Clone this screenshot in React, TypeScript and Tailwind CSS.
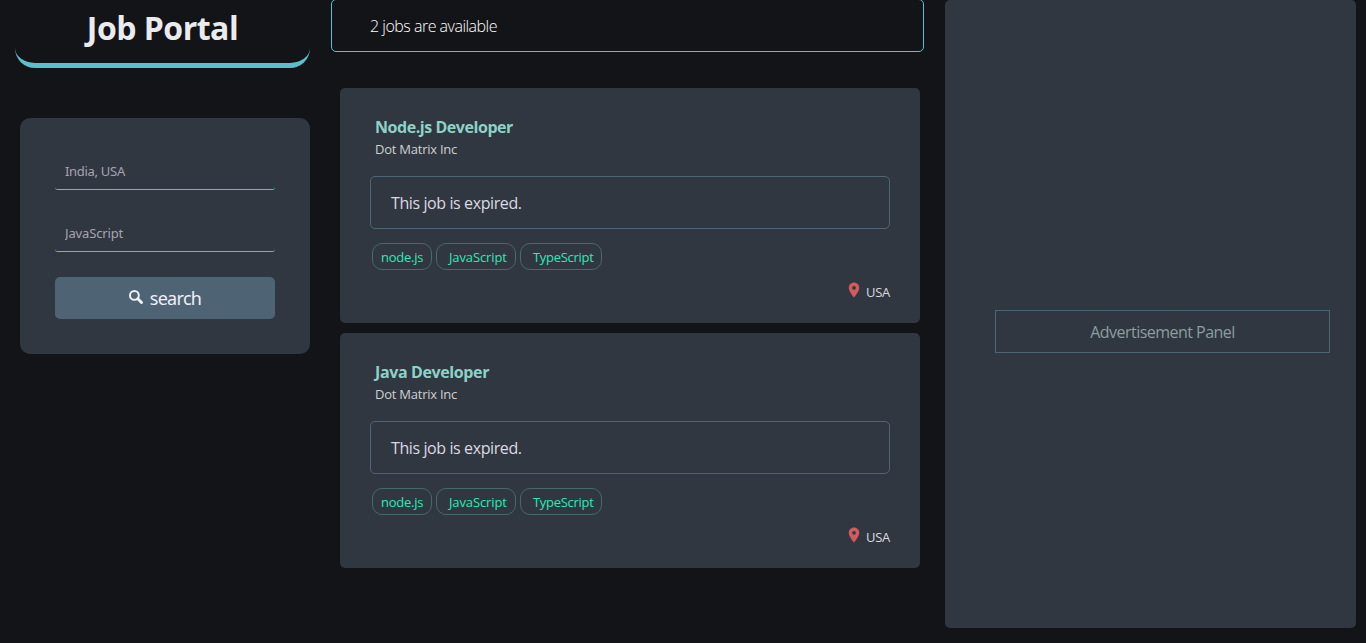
import { MdLocationOn } from "react-icons/md";

const jobs = [
  { title: "Node.js Developer", titleSpacing: "tracking-[-0.45px]", company: "Dot Matrix Inc", place: "USA" },
  { title: "Java Developer", titleSpacing: "tracking-[-0.38px]", company: "Dot Matrix Inc", place: "USA" },
];

function SearchIcon() {
  return (
    <svg viewBox="0 0 14 14" className="mb-[2px] h-[14px] w-[14px]" fill="none" stroke="currentColor">
      <circle cx="5.4" cy="5.4" r="4.4" strokeWidth="2" />
      <path d="M8.8 8.8 L12.5 12.5" strokeWidth="2.9" strokeLinecap="round" />
    </svg>
  );
}

function Job({ job }: { job: (typeof jobs)[number] }) {
  return (
    <article className="h-[235px] w-[580px] rounded-[5px] bg-[#303740] px-[30px] pt-[28px]">
      <h2 className={`pl-[5px] text-[16px] leading-[22px] font-bold text-[#8dd2c8] ${job.titleSpacing}`}>{job.title}</h2>
      <p className="pl-[5px] text-[13px] leading-[22px] tracking-[-0.24px] text-[#cfcfd2]">{job.company}</p>
      <div className="mt-[16px] flex h-[53px] items-center rounded-[5px] border border-[#4e6577] pt-px pl-[20px] text-[16px] text-[#dcd9e2]">
        <span className="tracking-[-0.4px]">This job is expired.</span>
      </div>
      <div className="mt-[14px] ml-[2px] flex gap-[4px] text-[13px] text-[#2beab8]">
        <span className="flex h-[27px] w-[60px] items-center rounded-[10px] border border-[#47696b] pt-[2px] pl-[8px] tracking-[-0.25px]">node.js</span>
        <span className="flex h-[27px] w-[80px] items-center rounded-[10px] border border-[#47696b] pt-[2px] pl-[12px] tracking-[-0.12px]">JavaScript</span>
        <span className="flex h-[27px] w-[82px] items-center rounded-[10px] border border-[#47696b] pt-[2px] pl-[12px] tracking-[-0.3px]">TypeScript</span>
      </div>
      <div className="mt-[11px] flex h-[22px] items-start justify-end text-[13px] text-[#dcd9e2]">
        <MdLocationOn className="-mt-[0.5px] mr-[3px] h-[18px] w-[18px] text-[#d35b5d]" />
        <span className="w-[24px] leading-[22px] tracking-[-0.3px]">{job.place}</span>
      </div>
    </article>
  );
}

export default function App() {
  return (
    <div className="flex h-[643px] w-[1366px] overflow-hidden bg-[#131418] font-['Open_Sans',sans-serif]">
      <aside className="w-[310px] shrink-0">
        <h1 className="ml-[15px] h-[68px] rounded-[20px] border-b-[5px] border-[#5bbfcc] pt-[6px] text-center text-[32px] leading-[44px] font-bold tracking-[-0.5px] text-[#ebebed]">
          Job Portal
        </h1>
        <form className="mt-[50px] ml-[20px] h-[236px] rounded-[10px] bg-[#303740] px-[35px] pt-[35px] font-['Noto_Sans',sans-serif]">
          <input
            placeholder="India, USA"
            className="block h-[37px] w-full rounded-[3px] border-b border-[#5bbfcc] px-[10px] text-[13px] tracking-[-0.3px] placeholder:text-[#a8a3b0]"
          />
          <input
            placeholder="JavaScript"
            className="mt-[25px] block h-[37px] w-full rounded-[3px] border-b border-[#5bbfcc] px-[10px] text-[13px] tracking-[-0.15px] placeholder:text-[#a8a3b0]"
          />
          <button
            type="button"
            className="mt-[25px] flex h-[42px] w-full items-center justify-center gap-[7px] rounded-[5px] bg-[#4e6373] text-[18px] text-[#f0eff8]"
          >
            <SearchIcon />
            <span className="tracking-[-0.7px]">search</span>
          </button>
        </form>
      </aside>
      <main className="ml-[21px] w-[593px] shrink-0">
        <div className="-mt-px flex h-[53px] items-center rounded-[5px] border border-[#5bbfcc] pt-px pl-[38px] text-[16px] font-light text-[#ffffff]">
          <span className="tracking-[-0.5px]">2 jobs are available</span>
        </div>
        <div className="mt-[36px] ml-[9px] flex flex-col gap-[10px]">
          {jobs.map((job) => (
            <Job key={job.title} job={job} />
          ))}
        </div>
      </main>
      <section className="ml-[21px] h-[628px] w-[411px] shrink-0 rounded-[5px] bg-[#303740] pt-[310px] pl-[50px]">
        <div className="flex h-[43px] w-[335px] items-center justify-center border border-[#4e6577] pt-px text-[16px] text-[#8c9da1]">
          <span className="tracking-[-0.52px]">Advertisement Panel</span>
        </div>
      </section>
    </div>
  );
}
